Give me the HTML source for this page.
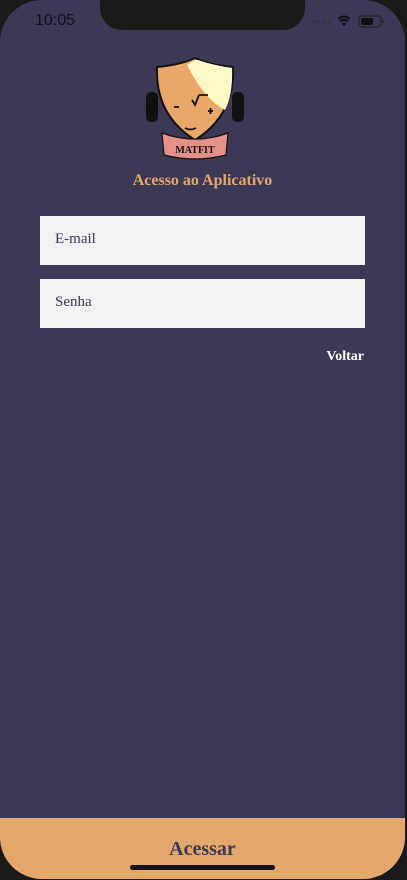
<!DOCTYPE html>
<html><head><style>
html,body{margin:0;padding:0;background:#1a1a1a;width:407px;height:880px;overflow:hidden}
.screen{position:absolute;left:0;top:0;width:405px;height:879px;background:#3c3856;border-radius:42px;overflow:hidden}
.notch{position:absolute;left:100px;top:0;width:205px;height:30px;background:#1a1a1a;border-radius:0 0 22px 22px}
.time{position:absolute;left:35px;top:12px;font:500 16px "Liberation Sans",sans-serif;color:#111}
.inp{position:absolute;left:40px;width:325px;height:49px;background:#f2f2f2;font:15px "Liberation Serif",serif;color:#3c3856;box-sizing:border-box;padding:15px 15px}
.title{position:absolute;top:172px;width:100%;text-align:center;font:bold 16px "Liberation Serif",serif;color:#e4a86c}
.voltar{position:absolute;right:41px;top:349px;font:bold 14px "Liberation Serif",serif;color:#fff}
.btn{position:absolute;left:0;top:818px;width:405px;height:62px;background:#e4a86c;text-align:center}
.btn span{position:absolute;top:20px;left:0;right:0;font:bold 20px "Liberation Serif",serif;color:#3c3856}
.home{position:absolute;left:130px;top:865px;width:145px;height:5px;border-radius:3px;background:#111}
</style></head><body>
<div class="screen">
<div class="notch"></div>
<div class="time">10:05</div>
<svg style="position:absolute;left:312px;top:12px" width="75" height="18">
<g fill="#333"><circle cx="2" cy="10" r="1.3"/><circle cx="7" cy="10" r="1.3"/><circle cx="12" cy="10" r="1.3"/><circle cx="17" cy="10" r="1.3"/></g>
<path d="M26 7 Q32 2 38 7 M28 9.5 Q32 6 36 9.5" stroke="#111" stroke-width="2" fill="none"/><circle cx="32" cy="12" r="1.6" fill="#111"/>
<rect x="47" y="4" width="22" height="11" rx="3" fill="none" stroke="#222" stroke-width="1.2"/><rect x="49" y="6" width="12" height="7" rx="1.5" fill="#111"/><rect x="70" y="8" width="1.5" height="3" fill="#222"/>
</svg>
<svg style="position:absolute;left:140px;top:55px" width="110" height="105" viewBox="0 0 110 105">
<rect x="6" y="37" width="12" height="30" rx="5" fill="#111"/><rect x="92" y="37" width="12" height="30" rx="5" fill="#111"/>
<path d="M17 12 Q40 10 55 3 Q70 10 93 12 Q95 60 55 85 Q15 60 17 12Z" fill="#e9a86a" stroke="#111" stroke-width="2"/>
<path d="M47 10 Q55 4 58 5 Q72 10 92 13 Q93 40 85 55 Q65 45 47 10Z" fill="#fdf8c8"/>
<path d="M34 52h5M52 45l3 5 4-10h9M68 56h5M70.5 53v6M45 73 Q50 76 56 73" stroke="#111" stroke-width="1.8" fill="none"/>
<path d="M22 78 Q55 90 88 78 L86 100 Q55 108 24 100Z" fill="#e29088" stroke="#111" stroke-width="1.2"/>
<text x="55" y="98" text-anchor="middle" font-family="Liberation Serif,serif" font-weight="bold" font-size="10" fill="#111">MATFIT</text>
</svg>
<div class="title">Acesso ao Aplicativo</div>
<div class="inp" style="top:216px">E-mail</div>
<div class="inp" style="top:279px">Senha</div>
<div class="voltar">Voltar</div>
<div class="btn"><span>Acessar</span></div>
<div class="home"></div>
</div>
</body></html>
